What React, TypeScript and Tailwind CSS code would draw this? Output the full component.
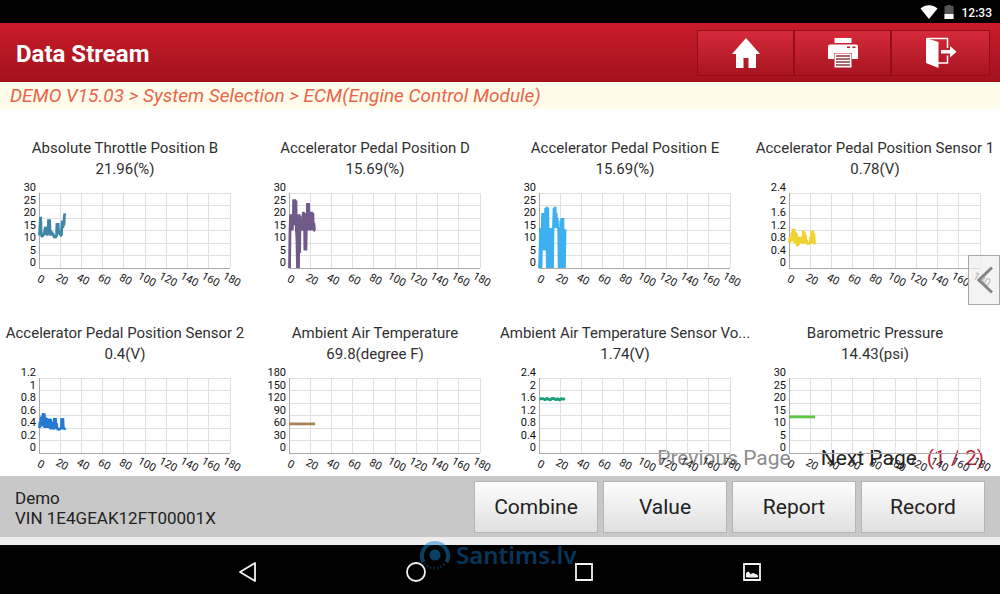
interface Stream {
  title: string
  value: string
  max: number
  ticks: string[]
  color: string
  samples: number[]
}

const streams: Stream[] = [
  {
    title: 'Absolute Throttle Position B',
    value: '21.96(%)',
    max: 30,
    ticks: ['0', '5', '10', '15', '20', '25', '30'],
    color: '#3f86a6',
    samples: [
      13, 17, 20.5, 14, 13, 12.5, 13, 13, 14, 13.5, 15, 16.5, 14.5, 16, 13, 15, 13.5, 19.5, 13.5, 19.5, 13, 15, 13, 14.5,
      13, 14, 13, 13, 12, 12.5, 12, 13, 12.5, 18, 14, 18, 13.5, 15, 14, 14, 13, 13, 16, 19, 16, 19, 17, 21, 21.9,
    ],
  },
  {
    title: 'Accelerator Pedal Position D',
    value: '15.69(%)',
    max: 30,
    ticks: ['0', '5', '10', '15', '20', '25', '30'],
    color: '#705a8a',
    samples: [
      0, 15, 21.5, 15, 21.5, 15, 18, 17, 27.5, 18, 27.5, 17, 27, 15, 12, 0, 8, 0, 21.5, 6, 21, 15, 17, 15, 17, 15, 22.5,
      15, 22, 7, 15, 7, 20, 16, 26, 15, 26, 15, 22, 15, 22.5, 15, 22.5, 16, 22, 15, 18, 15, 15,
    ],
  },
  {
    title: 'Accelerator Pedal Position E',
    value: '15.69(%)',
    max: 30,
    ticks: ['0', '5', '10', '15', '20', '25', '30'],
    color: '#3cb0f0',
    samples: [
      0, 6, 16, 0, 16, 12, 22, 10, 22, 7, 22, 7, 24, 7, 24.5, 0, 24, 0, 16, 0, 16, 6, 16, 0, 16, 0, 16, 16, 24, 16, 24.5,
      16, 22, 16, 20, 16, 16, 16, 0, 16, 0, 19, 0, 20, 0, 20, 0, 15, 0, 15.5,
    ],
  },
  {
    title: 'Accelerator Pedal Position Sensor 1',
    value: '0.78(V)',
    max: 2.4,
    ticks: ['0', '0.4', '0.8', '1.2', '1.6', '2', '2.4'],
    color: '#f0d330',
    samples: [
      0.8, 1, 0.85, 1, 0.9, 1.15, 0.9, 1.25, 0.85, 1.25, 0.8, 1.15, 0.8, 1.1, 0.75, 0.7, 1, 0.75, 1, 0.8, 1, 0.8, 0.95,
      0.8, 0.9, 0.78, 1.2, 0.78, 1.15, 0.78, 1.05, 0.78, 0.9, 0.78, 0.78, 0.78, 0.78, 0.78, 0.8, 0.78, 1, 0.78, 1.2,
      0.78, 1.2, 0.78, 1.1, 0.78, 0.78,
    ],
  },
  {
    title: 'Accelerator Pedal Position Sensor 2',
    value: '0.4(V)',
    max: 1.2,
    ticks: ['0', '0.2', '0.4', '0.6', '0.8', '1', '1.2'],
    color: '#2679d0',
    samples: [
      0.4, 0.5, 0.42, 0.58, 0.44, 0.6, 0.45, 0.64, 0.42, 0.63, 0.4, 0.57, 0.4, 0.56, 0.4, 0.55, 0.4, 0.54, 0.4, 0.55,
      0.39, 0.54, 0.38, 0.5, 0.38, 0.46, 0.38, 0.4, 0.56, 0.39, 0.56, 0.39, 0.48, 0.38, 0.4, 0.38, 0.38, 0.38, 0.39,
      0.38, 0.4, 0.38, 0.56, 0.38, 0.56, 0.38, 0.4, 0.38, 0.4,
    ],
  },
  {
    title: 'Ambient Air Temperature',
    value: '69.8(degree F)',
    max: 180,
    ticks: ['0', '30', '60', '90', '120', '150', '180'],
    color: '#ad8355',
    samples: [69.8, 69.8],
  },
  {
    title: 'Ambient Air Temperature Sensor Vo...',
    value: '1.74(V)',
    max: 2.4,
    ticks: ['0', '0.4', '0.8', '1.2', '1.6', '2', '2.4'],
    color: '#1f9e80',
    samples: [1.72, 1.74, 1.74, 1.7, 1.75, 1.72, 1.7, 1.75, 1.74, 1.7, 1.74, 1.69, 1.74, 1.72, 1.74],
  },
  {
    title: 'Barometric Pressure',
    value: '14.43(psi)',
    max: 30,
    ticks: ['0', '5', '10', '15', '20', '25', '30'],
    color: '#5cc544',
    samples: [14.43, 14.43],
  },
]

const actions = ['Combine', 'Value', 'Report', 'Record']
const times = [0, 20, 40, 60, 80, 100, 120, 140, 160, 180]

// plot area inside the 250x111 chart
const LEFT = 39
const RIGHT = 230
const TOP = 13
const BOTTOM = 88
const ELAPSED = 24

function timeToX(t: number) {
  return LEFT + (t / 180) * (RIGHT - LEFT)
}

function Chart({ stream }: { stream: Stream }) {
  const { samples, max, ticks, color } = stream
  const points = samples
    .map((v, i) => {
      const x = timeToX((i / (samples.length - 1)) * ELAPSED) + 0.5
      const y = BOTTOM - (v / max) * (BOTTOM - TOP)
      return `${x.toFixed(1)},${y.toFixed(1)}`
    })
    .join(' ')

  return (
    <svg viewBox="0 0 250 111" className="block h-[111px] w-full overflow-visible" role="img" aria-label={stream.title}>
      <g stroke="#e0e0e0" shapeRendering="crispEdges">
        {ticks.map((tick, i) => {
          const y = BOTTOM - (i * (BOTTOM - TOP)) / 6
          return <line key={tick} x1={LEFT} x2={RIGHT} y1={y} y2={y} />
        })}
        {times.map((t) => (
          <line key={t} x1={timeToX(t)} x2={timeToX(t)} y1={TOP} y2={BOTTOM} />
        ))}
      </g>
      <path d={`M${LEFT} ${TOP}V${BOTTOM}H${RIGHT}`} fill="none" stroke="#aaaaaa" shapeRendering="crispEdges" />
      <g fontSize="11" fill="#111111">
        {ticks.map((tick, i) => (
          <text key={tick} x="36" y={BOTTOM - 2 - (i * (BOTTOM - TOP)) / 6} textAnchor="end">
            {tick}
          </text>
        ))}
      </g>
      <g fontSize="11" fill="#222222">
        {times.map((t) => (
          <text key={t} transform={`translate(${timeToX(t) + 2} 99) rotate(28)`} y="4" textAnchor="middle">
            {t}
          </text>
        ))}
      </g>
      <polyline points={points} fill="none" stroke={color} strokeWidth="2.8" strokeLinejoin="bevel" />
    </svg>
  )
}

function StreamCard({ stream }: { stream: Stream }) {
  return (
    <section className="min-w-0 text-center text-[15px] leading-[21px] text-[#303030]">
      <h2 className="whitespace-nowrap">{stream.title}</h2>
      <p>{stream.value}</p>
      <Chart stream={stream} />
    </section>
  )
}

function HomeIcon() {
  return (
    <svg viewBox="0 0 30 30" className="size-[30px]" fill="#fff">
      <path d="M15 0 29 16H25V30H17.500V20H12.500V30H5V16H1Z" />
    </svg>
  )
}

function PrinterIcon() {
  return (
    <svg viewBox="0 0 30 30" className="size-[30px]">
      <path d="M6.500 0h17v5h-17z" fill="#fff" />
      <path d="M2 6.500h26a2 2 0 0 1 2 2V21h-6v-6H6v6H0V8.500a2 2 0 0 1 2-2z" fill="#fff" />
      <path d="M19 8.500h3v1.500h-3zM24.500 8.500h3v1.500h-3z" fill="#b81a2a" />
      <path d="M6.500 15.500h17v14h-17z" fill="#fff" />
      <path d="M8 18h14M8 21h14M8 24h14M8 27h14" stroke="#8d3a42" strokeWidth="1.300" />
    </svg>
  )
}

function ExitIcon() {
  return (
    <svg viewBox="0 0 32 32" className="size-8">
      <path d="M2 1.500h20.500V11M22.500 18.500V26H13" fill="none" stroke="#fff" strokeWidth="1.500" />
      <path d="M1 1 13.500 5V31L1 26Z" fill="#fff" />
      <path d="M16 13h9V9l6.500 5.700L25 20.500v-4h-9z" fill="#fff" />
    </svg>
  )
}

const tools = [
  { label: 'Home', icon: <HomeIcon /> },
  { label: 'Print', icon: <PrinterIcon /> },
  { label: 'Exit', icon: <ExitIcon /> },
]

const systemKeys = [
  { label: 'Back', icon: <path d="M19 3V21L4 12Z" strokeLinejoin="round" /> },
  { label: 'Home key', icon: <circle cx="12" cy="12" r="9" /> },
  { label: 'Recent apps', icon: <path d="M4 4H20V20H4Z" /> },
  {
    label: 'Screenshot',
    icon: (
      <>
        <path d="M4 4H20V20H4Z" />
        <path d="M6.500 17v-4l2-1 2 2.500 3-1 4 2V17z" fill="#f2f2f2" strokeWidth="1" />
      </>
    ),
  },
]

function StatusBar() {
  return (
    <div className="flex h-[23px] items-center justify-end bg-black pr-2 text-white">
      <svg viewBox="0 0 18 14" className="mr-1.5 h-3.5 w-[18px]" fill="#fff">
        <path d="M0.500 3.500C5-1 13-1 17.500 3.500L9 14Z" />
      </svg>
      <svg viewBox="0 0 10 14" className="mr-2 h-3.5 w-2.5">
        <path d="M3 0h4v1h2.500V14h-9V1H3z" fill="#555" />
        <path d="M0.500 9h9v5h-9z" fill="#fff" />
      </svg>
      <time className="pt-0.5 text-xs leading-none font-medium">12:33</time>
    </div>
  )
}

function Watermark() {
  return (
    <div className="pointer-events-none absolute -top-[5px] left-1/2 flex -translate-x-20 items-center gap-1.5 opacity-50">
      <svg viewBox="0 0 30 30" className="size-[30px]">
        <path d="M3.500 22A13 13 0 1 1 26.500 22" fill="none" stroke="#1580c8" strokeWidth="4" />
        <path d="M4.500 23A13 13 0 0 0 25.500 23" fill="none" stroke="#1a5078" strokeWidth="3" strokeDasharray="1.500 2" />
        <circle cx="15" cy="15" r="5.500" fill="#1580c8" />
      </svg>
      <span className="font-['Noto_Sans',sans-serif] text-2xl leading-[30px] font-semibold text-[#0d6ab4]">Santims.lv</span>
    </div>
  )
}

export default function App() {
  return (
    <div className="flex min-h-screen flex-col bg-white font-['Roboto',sans-serif]">
      <StatusBar />
      <header className="flex h-[59px] items-center justify-between bg-linear-to-b from-[#c91b2b] to-[#a3121c] pr-2.5 pl-4">
        <h1 className="pt-0.5 text-2xl font-bold text-white">Data Stream</h1>
        <div className="flex divide-x-2 divide-[#960d1a] border border-[#960d1a]">
          {tools.map((tool) => (
            <button
              key={tool.label}
              aria-label={tool.label}
              className="flex h-11 w-[97px] items-center justify-center bg-linear-to-b from-[#d62a3c] to-[#a8141f]"
            >
              {tool.icon}
            </button>
          ))}
        </div>
      </header>
      <nav className="h-[27px] bg-[#fffcec] px-2.5 text-[19px] leading-[27px] text-[#e8654a] italic">
        DEMO V15.03 &gt; System Selection &gt; ECM(Engine Control Module)
      </nav>

      <main className="relative flex-1 pt-[29px]">
        <div className="pointer-events-none relative z-10 grid grid-cols-4 gap-y-8">
          {streams.map((stream) => (
            <StreamCard key={stream.title} stream={stream} />
          ))}
        </div>
        <div className="absolute right-4 bottom-1 flex text-[21px] leading-7">
          <button className="mr-[30px] text-[#8c8c8c]">Previous Page</button>
          <button className="mr-2.5 text-[#222222]">Next Page</button>
          <span className="text-[#c41f38]">(1 / 2)</span>
        </div>
        <button
          aria-label="Open side panel"
          className="absolute top-[146px] right-0 z-20 flex h-[50px] w-8 items-center justify-end border border-[#a8a8a8] bg-[#eeeeee]/70 pr-1.5"
        >
          <svg viewBox="0 0 16 28" className="h-7 w-4" fill="none" stroke="#858585" strokeWidth="3">
            <path d="M15 1.500 2 14 15 26.500" />
          </svg>
        </button>
      </main>

      <footer className="flex h-[61px] items-center justify-between bg-[#c8c8c8] px-[15px]">
        <div className="pt-0.5 text-[17px] leading-5 text-[#222222]">
          <p>Demo</p>
          <p>VIN 1E4GEAK12FT00001X</p>
        </div>
        <div className="flex gap-[5px]">
          {actions.map((action) => (
            <button
              key={action}
              className="h-[52px] w-[124px] border border-[#b4b4b4] bg-linear-to-b from-[#fdfdfd] to-[#e0e0e0] pt-0.5 text-[21px] text-[#222222]"
            >
              {action}
            </button>
          ))}
        </div>
      </footer>
      <div className="h-2 bg-[#eeeeee]" />

      <div className="relative flex h-[49px] items-center justify-center bg-black pt-1">
        {systemKeys.map((key) => (
          <button key={key.label} aria-label={key.label} className="flex w-[168px] justify-center">
            <svg viewBox="0 0 24 24" className="size-6" fill="none" stroke="#f2f2f2" strokeWidth="1.800">
              {key.icon}
            </svg>
          </button>
        ))}
        <Watermark />
      </div>
    </div>
  )
}
